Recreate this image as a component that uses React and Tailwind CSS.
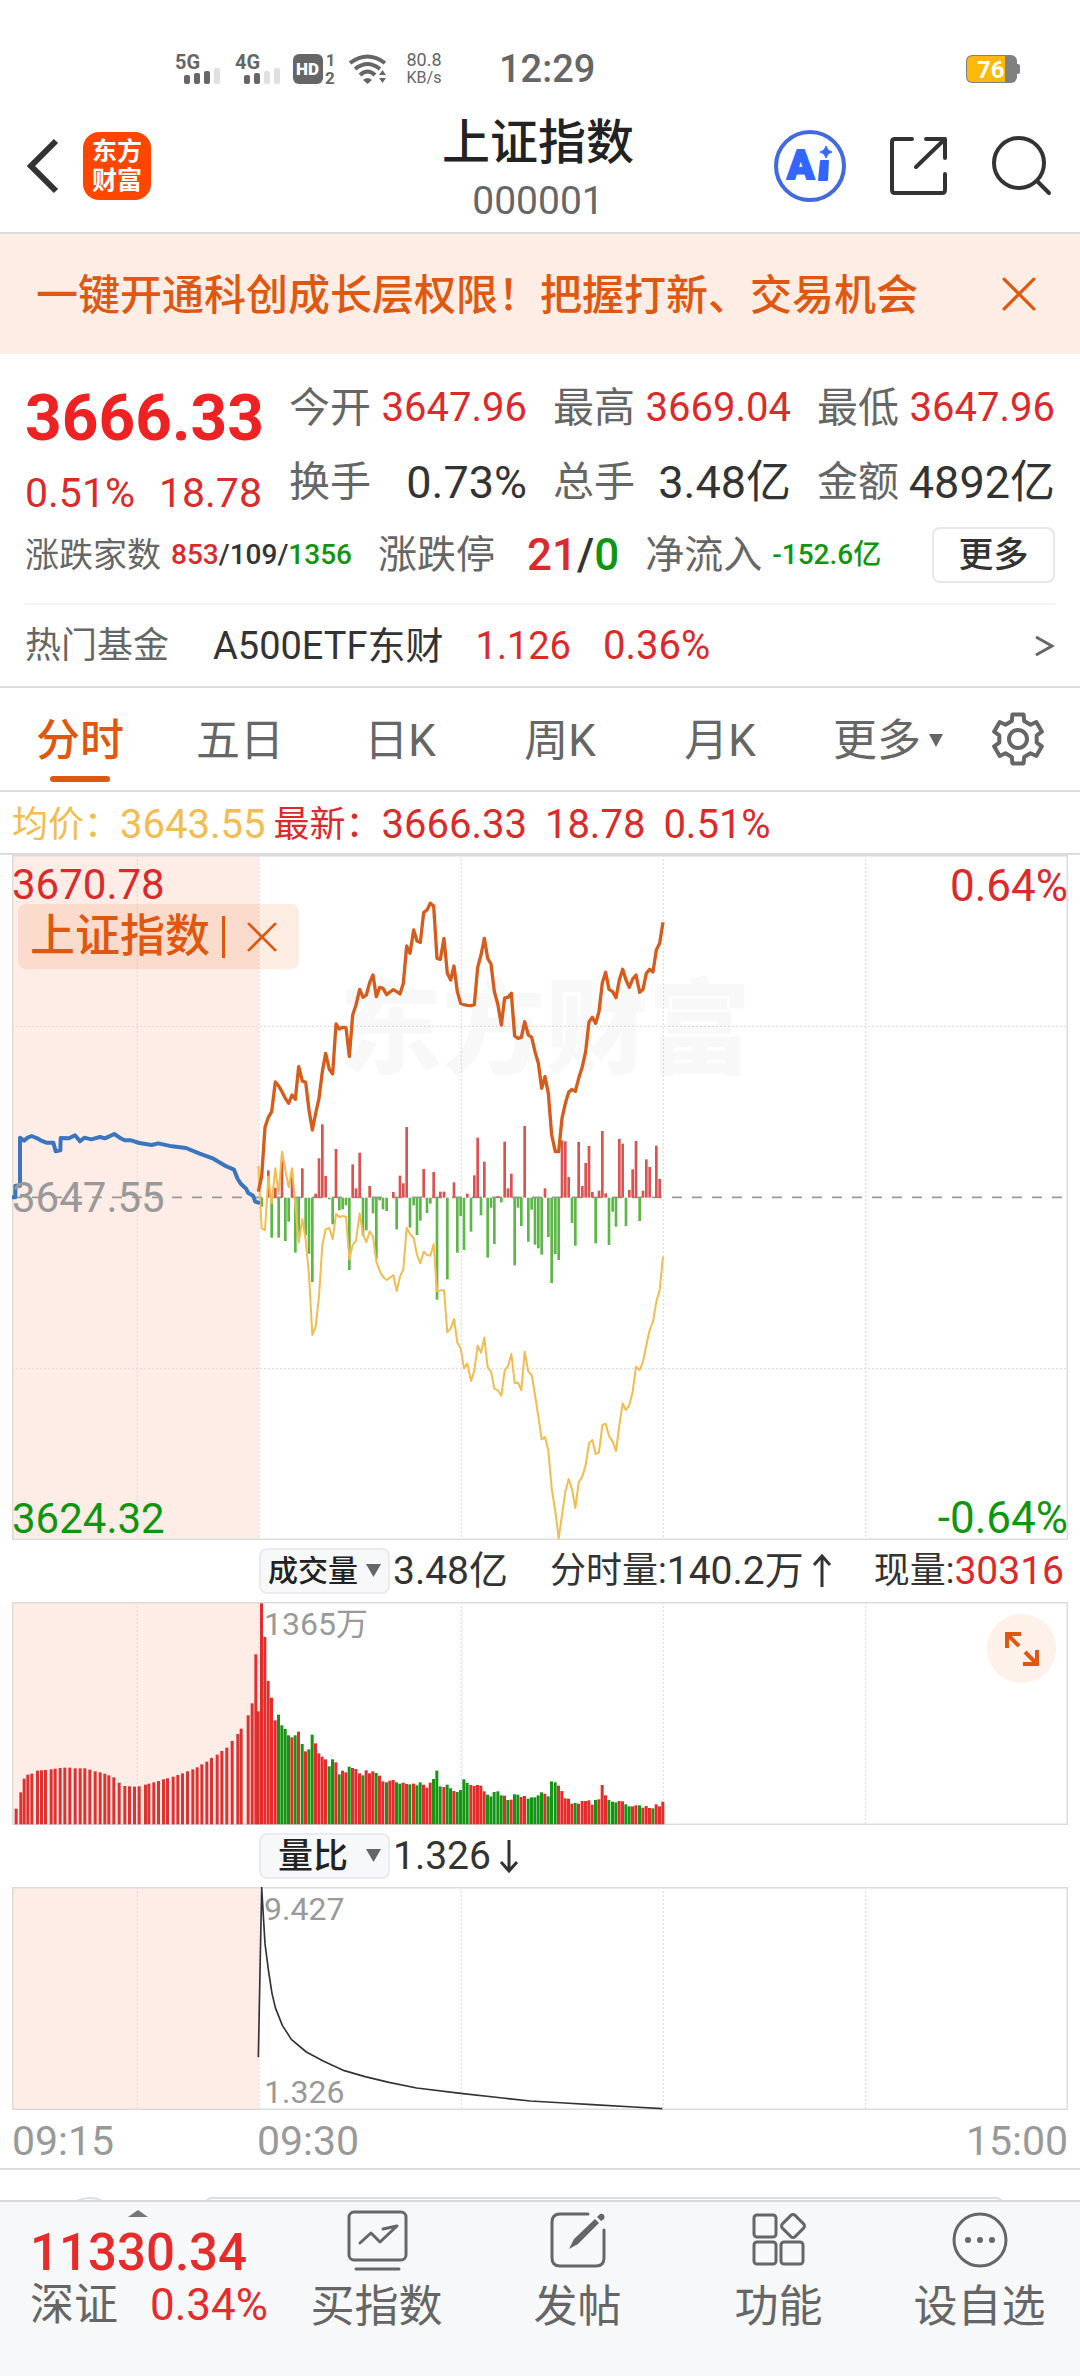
import { useState } from "react";

// Plot units are a third of a pixel: 3168 units wide, one minute = 10.12 units
const PLOT_W = 3168;
const MINUTE = 10.12;
const OPEN_X = 739;
const GRID_X = [376, 741, 1348, 1954, 2561];

const minuteX = (i) => Math.round(OPEN_X + i * MINUTE);

const PRICE = [
  935, 890, 742, 712, 695, 606, 618, 635, 655, 670, 645, 658, 560, 603, 607, 690, 750, 700, 655, 575,
  520, 568, 582, 432, 447, 442, 443, 530, 405, 375, 328, 352, 345, 308, 285, 350, 322, 325, 344, 336,
  329, 335, 342, 310, 198, 220, 150, 183, 187, 98, 90, 70, 78, 235, 238, 175, 280, 300, 258, 335,
  370, 374, 376, 377, 374, 262, 225, 175, 235, 252, 335, 375, 435, 354, 352, 340, 468, 475, 472, 425,
  465, 472, 515, 550, 625, 590, 640, 765, 815, 815, 715, 670, 637, 628, 634, 595, 560, 515, 425, 412,
  430, 395, 308, 277, 328, 335, 353, 300, 268, 300, 322, 297, 285, 337, 328, 280, 268, 276, 210, 190, 127,
];

const AVERAGE = [
  198, 385, 390, 230, 310, 205, 282, 155, 210, 262, 205, 315, 428, 357, 420, 525, 705, 680, 590, 435,
  388, 384, 418, 342, 351, 348, 350, 478, 435, 422, 340, 403, 427, 394, 410, 485, 512, 531, 540, 533,
  525, 573, 530, 508, 383, 402, 414, 465, 490, 455, 465, 467, 432, 574, 571, 571, 697, 686, 657, 728,
  745, 805, 791, 843, 812, 737, 758, 713, 802, 815, 866, 871, 887, 812, 798, 762, 849, 848, 871, 755,
  815, 825, 885, 950, 1018, 1011, 1052, 1165, 1235, 1315, 1245, 1175, 1137, 1168, 1224, 1147, 1130, 1095, 1030, 1020,
  1062, 1057, 975, 971, 1008, 1025, 1053, 975, 910, 930, 915, 875, 800, 810, 785, 735, 690, 665, 605, 570, 470,
];

// above zero = red, below = green
const MOMENTUM = [
  0, -27, 0, 82, -120, 30, -120, 112, -130, -72, 75, -165, -110, 88, -113, -168, -253, 12, 118, 220,
  65, -5, -80, 146, -38, -35, -23, -217, 100, 28, 135, -115, -98, 35, -47, -185, -8, -35, -40, 0,
  17, -95, 66, 43, 212, -90, -23, -112, -69, 86, -46, -18, 77, -306, 18, 18, -245, 0, 46, -165,
  -55, -157, 12, -102, 67, 180, -53, 108, -180, -30, -139, 5, -14, 168, 28, 72, -203, -30, -85, 215,
  -132, -36, -141, -152, -171, 28, -118, -256, -169, -187, 172, 169, 62, -76, -144, 167, 35, 104, 155, 17,
  -137, 21, 200, 13, -142, -42, -87, 176, 162, -85, 23, 85, 170, -70, 21, 115, 92, 0, 156, 56,
];

const AUCTION =
  "0,1027 10,1027 10,992 24,992 24,848 36,857 47,848 59,843 76,850 88,857 103,863 124,863 131,889 145,886 146,849 171,850 189,841 204,859 217,848 238,853 264,846 279,850 307,837 326,850 338,856 357,856 382,864 419,870 439,865 480,874 522,879 563,896 604,911 641,933 666,944 677,972 687,987 703,1002 708,1013 723,1022 730,1040 739,1043";

const AUCTION_VOLUME = [
  [12, 47], [26, 96], [36, 137], [47, 149], [59, 152], [76, 161], [88, 162], [100, 163], [117, 165], [129, 167],
  [144, 169], [158, 170], [173, 170], [189, 168], [204, 168], [218, 168], [233, 164], [249, 159], [264, 156], [278, 152],
  [290, 147], [305, 141], [321, 125], [338, 115], [352, 114], [367, 113], [381, 114], [400, 119], [410, 122], [425, 126],
  [439, 130], [454, 135], [466, 138], [483, 143], [497, 148], [511, 153], [526, 159], [542, 165], [555, 171], [569, 180],
  [584, 188], [598, 199], [615, 209], [629, 220], [644, 230], [660, 250], [677, 271], [687, 287], [708, 327], [720, 363], [731, 510],
];

const VOLUME = [
  339, 663, 562, 430, 380, 312, 329, 297, 286, 267, 261, 267, 278, 241, 219, 225, 269, 243, 213, 203,
  195, 174, 195, 186, 150, 161, 156, 173, 169, 166, 153, 147, 162, 153, 159, 154, 146, 129, 126, 131,
  133, 126, 122, 125, 121, 120, 122, 117, 126, 119, 110, 125, 136, 161, 114, 112, 119, 108, 100, 97,
  103, 135, 124, 118, 115, 118, 116, 99, 89, 84, 97, 99, 87, 86, 73, 74, 90, 89, 82, 85,
  77, 81, 81, 87, 96, 92, 84, 129, 126, 116, 100, 78, 77, 62, 64, 62, 70, 70, 72, 59,
  73, 75, 118, 87, 73, 68, 66, 70, 69, 60, 54, 54, 57, 57, 50, 55, 49, 48, 60, 54, 68,
];

const VOLUME_SIDE =
  "RRRRRRGGGGRGRGRGGRRRRGGRGRRGRRRGRRRGRRGRRGGRRGRGGRRRGGGRGGRGGGGRRRRRGGGGGRGRGGRRGGGGGRGGGRRRRRGRRRRRGRRRGGGRRGGRRGRRRGRRR";

const RATIO =
  "739,511 749,2 759,170 770,255 780,319 790,362 811,415 838,457 883,495 935,523 997,551 1059,569 1131,586 1214,603 1346,619 1472,633 1555,642 1658,648 1741,653 1865,660 1951,665";

const TABS = ["分时", "五日", "日K", "周K", "月K"];

const polar = (r, deg) => {
  const a = (deg * Math.PI) / 180;
  return `${(28 + r * Math.cos(a)).toFixed(1)},${(28 + r * Math.sin(a)).toFixed(1)}`;
};
const GEAR = [0, 1, 2, 3, 4, 5]
  .flatMap((k) => {
    const a = -90 + k * 60;
    return [polar(19, a - 19), polar(25, a - 13), polar(25, a + 13), polar(19, a + 19)];
  })
  .join(" ");

const line = (values, offset) => values.map((y, i) => `${minuteX(i)},${y + offset}`).join(" ");

function Signal({ label, strength }) {
  return (
    <svg className="overflow-visible" width="46" height="32" viewBox="0 0 46 32">
      <text x="0" y="16" fontSize="20" fontWeight="700" fill="#666">{label}</text>
      {[0, 1, 2, 3].map((i) => (
        <rect key={i} x={9 + i * 10} y={22 - i * 2 - (i === 3 ? 1 : 0)} width="6" height={9 + i * 2 + (i === 3 ? 1 : 0)} rx="2" fill={i < strength ? "#666" : "#e0e0e0"} />
      ))}
    </svg>
  );
}

function StatusBar() {
  return (
    <div className="flex h-[100px] items-center pt-[38px] pl-[175px] pr-[60px] text-[#666]">
      <Signal label="5G" strength={3} />
      <span className="ml-[14px]">
        <Signal label="4G" strength={2} />
      </span>
      <svg className="ml-3 overflow-visible" width="44" height="32" viewBox="0 0 44 32">
        <rect x="0" y="1" width="30" height="30" rx="6" fill="#666" />
        <text x="3" y="22" fontSize="17" fontWeight="900" fill="#fff">HD</text>
        <text x="33" y="13" fontSize="16" fontWeight="700" fill="#666">1</text>
        <text x="32" y="31" fontSize="17" fontWeight="700" fill="#666">2</text>
      </svg>
      <svg className="ml-3" width="38" height="32" viewBox="0 0 38 32" fill="none" stroke="#666" strokeWidth="4">
        <path d="M1 10 Q18.500 -3 36 10" />
        <path d="M6 16 Q18.500 6 31 16" />
        <path d="M11 22 Q18.500 15 26 22" />
        <path d="M14 27 Q18.500 23 23 27 L18.500 31 Z" fill="#666" stroke="none" />
        <path d="M30 22 L33.500 17 L37 22 Z M30 25 L33.500 30 L37 25 Z" fill="#666" stroke="none" />
      </svg>
      <div className="ml-4 w-[42px] text-center text-[18px] leading-[18px]">
        <div>80.8</div>
        <div className="text-[16px]">KB/s</div>
      </div>
      <div className="ml-[54px] text-[38px] leading-none font-medium">12:29</div>
      <svg className="ml-auto" width="54" height="28" viewBox="0 0 54 28">
        <rect x="48" y="9" width="6" height="10" rx="2" fill="#808080" />
        <rect x="0" y="0" width="51" height="28" rx="6" fill="#808080" />
        <path d="M7 1 H39 V27 H7 Q1 27 1 21 V7 Q1 1 7 1 Z" fill="#fdb90b" />
        <text x="11" y="23" fontSize="24" fontWeight="700" fill="#fff">76</text>
      </svg>
    </div>
  );
}

function NavBar() {
  return (
    <header className="grid h-[134px] grid-cols-[1fr_auto_1fr] items-center border-b-2 border-[#dcdcdc] pl-6 pr-7">
      <div className="flex items-center">
        <button aria-label="返回">
          <svg width="40" height="60" viewBox="0 0 40 60" fill="none" stroke="#333" strokeWidth="6">
            <path d="M32 5 L7 30 L32 55" />
          </svg>
        </button>
        <a href="#home" className="ml-[19px] flex h-[68px] w-[68px] flex-col items-center justify-center rounded-2xl bg-[#ff4600] text-[25px] leading-[29px] font-bold text-white">
          <span>东方</span>
          <span>财富</span>
        </a>
      </div>
      <div className="text-center">
        <h1 className="text-[48px] leading-[70px] font-medium text-[#222]">上证指数</h1>
        <div className="text-[39px] leading-[46px] text-[#666]">000001</div>
      </div>
      <div className="flex items-center justify-end">
        <button aria-label="AI 助手">
          <svg width="76" height="76" viewBox="0 0 76 76">
            <circle cx="38" cy="38" r="34" fill="none" stroke="#4169e1" strokeWidth="4" />
            <text x="15" y="51" fontSize="40" fontWeight="900" fill="#3366ff" stroke="#3366ff" strokeWidth="2" strokeLinejoin="round">A</text>
            <path d="M49 33 H56 L55 52 H47 Z" fill="#3366ff" stroke="#3366ff" strokeWidth="2" strokeLinejoin="round" />
            <path d="M54 18 Q55 23 60 24 Q55 25 54 30 Q53 25 48 24 Q53 23 54 18 Z" fill="#3366ff" stroke="#3366ff" />
          </svg>
        </button>
        <button className="ml-10" aria-label="分享">
          <svg width="62" height="62" viewBox="0 0 62 62" fill="none" stroke="#333" strokeWidth="4" strokeLinecap="round" strokeLinejoin="round">
            <path d="M24 4 H7 Q4 4 4 7 V55 Q4 58 7 58 H54 Q57 58 57 55 V39" />
            <path d="M38 4 H57 V23 M57 4 L28 32" />
          </svg>
        </button>
        <button className="ml-[38px]" aria-label="搜索">
          <svg width="64" height="64" viewBox="0 0 64 64" fill="none" stroke="#333" strokeWidth="4" strokeLinecap="round">
            <circle cx="31" cy="29" r="25" />
            <path d="M49 47 L61 59" />
          </svg>
        </button>
      </div>
    </header>
  );
}

function Cross({ size }) {
  return (
    <svg width={size} height={size} viewBox="0 0 32 32" fill="none" stroke="#e0570f" strokeWidth="3" strokeLinecap="round">
      <path d="M2 2 L30 30 M30 2 L2 30" />
    </svg>
  );
}

function Banner() {
  return (
    <div className="flex h-[120px] items-center justify-between bg-[#fdede4] pl-9 pr-11">
      <a href="#open" className="pt-1 text-[42px] leading-none font-medium text-[#e0570f]">一键开通科创成长层权限！把握打新、交易机会</a>
      <button aria-label="关闭">
        <Cross size={34} />
      </button>
    </div>
  );
}

function Stat({ label, value, up }) {
  return (
    <div className="flex h-[74px] items-center justify-between leading-none">
      <span className="text-[41px] text-[#666]">{label}</span>
      {up ? <span className="text-[40px] text-[#dc2a2a]">{value}</span> : <span className="text-[45px] text-[#333]">{value}</span>}
    </div>
  );
}

function Quote() {
  return (
    <section className="border-b-2 border-[#dcdcdc] px-[25px] pt-[17px] whitespace-nowrap">
      <div className="flex">
        <div className="w-[264px] shrink-0 text-[#dc2a2a]">
          <div className="text-[64px] leading-[96px] font-bold text-[#ee2222]">3666.33</div>
          <div className="flex gap-6 text-[41px] leading-[52px]">
            <span>0.51%</span>
            <span>18.78</span>
          </div>
        </div>
        <div className="grid flex-1 grid-cols-3 gap-x-[26px]">
          <Stat label="今开" value="3647.96" up />
          <Stat label="最高" value="3669.04" up />
          <Stat label="最低" value="3647.96" up />
          <Stat label="换手" value="0.73%" />
          <Stat label="总手" value="3.48亿" />
          <Stat label="金额" value="4892亿" />
        </div>
      </div>
      <div className="flex h-[72px] items-center leading-none text-[#666]">
        <span className="text-[34px]">涨跌家数</span>
        <span className="ml-[10px] text-[28px] font-medium text-[#333]">
          <span className="text-[#dc2a2a]">853</span>/109/<span className="text-[#0f960f]">1356</span>
        </span>
        <span className="ml-[26px] text-[39px]">涨跌停</span>
        <span className="ml-8 text-[44px] font-medium text-[#333]">
          <span className="text-[#dc2a2a]">21</span>/<span className="text-[#0f960f]">0</span>
        </span>
        <span className="ml-[26px] text-[39px]">净流入</span>
        <span className="ml-[10px] text-[28px] font-medium text-[#0f960f]">-152.6亿</span>
        <button className="ml-auto h-14 w-[123px] rounded-lg border-2 border-[#e8e8e8] text-[35px] font-medium text-[#333]">更多</button>
      </div>
      <a href="#fund" className="mt-3 flex h-[83px] items-center border-t-2 border-[#f4f4f4] text-[38px] leading-none text-[#dc2a2a]">
        <span className="text-[36px] text-[#666]">热门基金</span>
        <span className="ml-11 text-[#333]">A500ETF东财</span>
        <span className="ml-8">1.126</span>
        <span className="ml-8 text-[40px]">0.36%</span>
        <svg className="ml-auto" width="20" height="22" viewBox="0 0 20 22" fill="none" stroke="#666" strokeWidth="3">
          <path d="M1 2 L17 11 L1 20" />
        </svg>
      </a>
    </section>
  );
}

function Tabs() {
  const [active, setActive] = useState("分时");
  return (
    <nav className="grid h-[104px] grid-cols-[repeat(5,160fr)_176fr_84fr] items-stretch border-b-2 border-[#dcdcdc] pr-5 text-[44px] text-[#666]">
      {TABS.map((tab) => (
        <button key={tab} onClick={() => setActive(tab)} className={tab === active ? "relative pt-1 font-medium text-[#e0570f]" : "relative pt-1"}>
          {tab}
          {tab === active && <span className="absolute bottom-2 left-1/2 h-[6px] w-[60px] -translate-x-1/2 rounded-full bg-[#e0570f]" />}
        </button>
      ))}
      <button className="flex items-center justify-center gap-2 pt-1">
        更多
        <svg width="14" height="14" viewBox="0 0 14 14" fill="#666">
          <path d="M0 0 H14 L7 13 Z" />
        </svg>
      </button>
      <button className="flex items-center justify-center" aria-label="设置">
        <svg width="56" height="56" viewBox="0 0 56 56" fill="none" stroke="#666" strokeWidth="4" strokeLinejoin="round">
          <polygon points={GEAR} />
          <circle cx="28" cy="28" r="9" />
        </svg>
      </button>
    </nav>
  );
}

function Grid({ height, rows = [] }) {
  return (
    <>
      <rect x="0" y="0" width="741" height={height} fill="#fdede6" />
      <g stroke="#dadada" strokeWidth="3" strokeDasharray="6 6">
        {GRID_X.map((x) => (
          <line key={x} x1={x} x2={x} y1="0" y2={height} />
        ))}
        {rows.map((y) => (
          <line key={y} x1="0" x2={PLOT_W} y1={y} y2={y} />
        ))}
      </g>
      <rect x="2" y="2" width={PLOT_W - 4} height={height - 4} fill="none" stroke="#dcdcdc" strokeWidth="5" />
    </>
  );
}

function PriceChart() {
  const [tagged, setTagged] = useState(true);
  return (
    <div className="relative mx-3 h-[685px] text-[42px] leading-none">
      <svg className="block h-full w-full" viewBox="0 0 3168 2055" preserveAspectRatio="none">
        <Grid height={2055} rows={[514, 1541]} />
        <text x="1600" y="634" textAnchor="middle" fontSize="309" fontWeight="900" fill="#777" fillOpacity="0.05">东方财富</text>
        <line x1="0" x2={PLOT_W} y1="1027" y2="1027" stroke="#999" strokeWidth="5" strokeDasharray="30 30" />
        {MOMENTUM.map((v, i) => (
          <rect key={i} x={minuteX(i) - 4} y={v > 0 ? 1028 - v : 1028} width="8" height={Math.abs(v)} fill={v > 0 ? "#db5250" : "#5cb648"} />
        ))}
        <g fill="none" strokeLinejoin="round">
          <polyline points={line(AVERAGE, 735)} stroke="#f2bc4e" strokeWidth="6" />
          <polyline points={line(PRICE, 75)} stroke="#d75c1c" strokeWidth="10" />
          <polyline points={AUCTION} stroke="#3a75bd" strokeWidth="12" strokeLinecap="round" />
        </g>
      </svg>
      <span className="absolute top-[9px] left-0 text-[#dc2a2a]">3670.78</span>
      <span className="absolute top-[9px] right-0 text-[44px] text-[#dc2a2a]">0.64%</span>
      <span className="absolute top-1/2 left-0 -translate-y-1/2 text-[#999]">3647.55</span>
      <span className="absolute bottom-0 left-0 text-[#0f960f]">3624.32</span>
      <span className="absolute right-0 bottom-0 text-[44px] text-[#0f960f]">-0.64%</span>
      {tagged && (
        <div className="absolute top-[49px] left-[6px] flex h-[65px] w-[281px] items-center rounded-lg bg-[#f26a20]/13 pl-3 text-[45px] font-medium text-[#e0570f]">
          上证指数
          <span className="ml-3 h-[42px] w-[3px] bg-[#e0570f]" />
          <button className="ml-[22px]" aria-label="移除上证指数" onClick={() => setTagged(false)}>
            <Cross size={30} />
          </button>
        </div>
      )}
    </div>
  );
}

function Indicator({ label, options, className }) {
  return (
    <div className="relative h-[46px] w-[131px] shrink-0">
      <select aria-label={label} defaultValue={options[0]} className={className}>
        {options.map((o) => (
          <option key={o}>{o}</option>
        ))}
      </select>
      <svg className="pointer-events-none absolute top-4 right-[9px]" width="15" height="13" viewBox="0 0 15 13" fill="#666">
        <path d="M0 0 H15 L7.500 13 Z" />
      </svg>
    </div>
  );
}

function Arrow({ down }) {
  return (
    <svg className={down ? "ml-2 rotate-180" : "ml-2"} width="20" height="34" viewBox="0 0 20 34" fill="none" stroke="#333" strokeWidth="3">
      <path d="M10 33 V3 M2 11 L10 2 L18 11" />
    </svg>
  );
}

function VolumeChart() {
  return (
    <>
      <div className="flex h-[62px] items-center pr-4 pl-[259px] text-[39px] leading-none whitespace-nowrap text-[#333]">
        <Indicator
          label="副图指标一"
          options={["成交量", "量比"]}
          className="h-full w-full appearance-none rounded-lg border-2 border-[#e9ebee] bg-[#f7f8fa] pl-[7px] text-[30px] font-medium text-[#222]"
        />
        <span className="ml-[3px]">3.48亿</span>
        <span className="ml-auto flex items-center">
          <span className="text-[36px]">分时量:</span>140.2万
          <Arrow />
        </span>
        <span className="ml-auto flex items-center">
          <span className="text-[36px]">现量:</span>
          <span className="text-[#dc2a2a]">30316</span>
        </span>
      </div>
      <div className="relative mx-3 h-[223px]">
        <svg className="block h-full w-full" viewBox="0 0 3168 669" preserveAspectRatio="none">
          <Grid height={669} />
          {AUCTION_VOLUME.map(([x, h]) => (
            <rect key={x} x={x - 4} y={667 - h} width="9" height={h} fill="#dc3232" />
          ))}
          {VOLUME.map((h, i) => (
            <rect key={i} x={minuteX(i) - 5} y={667 - h} width="9" height={h} fill={VOLUME_SIDE[i] === "G" ? "#149614" : "#e62b2b"} />
          ))}
        </svg>
        <span className="absolute top-1 left-[252px] text-[32px] leading-9 text-[#999]">1365万</span>
        <button className="absolute top-3 right-3 flex h-[69px] w-[69px] items-center justify-center rounded-full bg-[#fef1e9]" aria-label="全屏">
          <svg width="36" height="36" viewBox="0 0 36 36" fill="none" stroke="#e0570f" strokeWidth="4">
            <path d="M3 17 V3 H17 M3 3 L15 15 M33 19 V33 H19 M33 33 L21 21" />
          </svg>
        </button>
      </div>
    </>
  );
}

function RatioChart() {
  return (
    <>
      <div className="flex h-[62px] items-center pl-[259px] text-[39px] leading-none text-[#333]">
        <Indicator
          label="副图指标二"
          options={["量比", "成交量"]}
          className="h-full w-full appearance-none rounded-lg border-2 border-[#e9ebee] bg-[#f7f8fa] pl-[17px] text-[35px] font-medium text-[#222]"
        />
        <span className="ml-[3px]">1.326</span>
        <Arrow down />
      </div>
      <div className="relative mx-3 h-[223px] text-[32px] leading-9 text-[#999]">
        <svg className="block h-full w-full" viewBox="0 0 3168 669" preserveAspectRatio="none">
          <Grid height={669} />
          <polyline points={RATIO} fill="none" stroke="#333" strokeWidth="5" strokeLinejoin="round" />
        </svg>
        <span className="absolute top-1 left-[252px]">9.427</span>
        <span className="absolute bottom-0 left-[252px]">1.326</span>
      </div>
      <div className="grid h-[60px] grid-cols-[245fr_811fr] items-center border-b-2 border-[#dcdcdc] px-3 pt-1 text-[41px] leading-none text-[#999]">
        <span>09:15</span>
        <span className="flex justify-between">
          <span>09:30</span>
          <span>15:00</span>
        </span>
      </div>
    </>
  );
}

function Action({ label, children }) {
  return (
    <button className="flex flex-1 flex-col items-center pt-[6px] text-[44px] leading-[70px] text-[#666]">
      <svg width="64" height="64" viewBox="0 0 64 64" fill="none" stroke="#666" strokeWidth="3" strokeLinecap="round" strokeLinejoin="round">
        {children}
      </svg>
      {label}
    </button>
  );
}

function BottomBar() {
  return (
    <footer className="flex h-[176px] border-t-2 border-[#d5d9dd] bg-[#f7f8fa] whitespace-nowrap">
      <a href="#sz" className="flex w-[276px] shrink-0 flex-col pl-[30px] text-[#e62b2b]">
        <svg className="mt-2 ml-[98px]" width="20" height="7" viewBox="0 0 20 7" fill="#777">
          <path d="M0 7 L10 0 L20 7 Z" />
        </svg>
        <span className="text-[51px] leading-[72px] font-medium">11330.34</span>
        <span className="flex items-center gap-8 text-[44px] leading-[32px]">
          <span className="text-[#666]">深证</span>
          <span>0.34%</span>
        </span>
      </a>
      <Action label="买指数">
        <rect x="4" y="4" width="57" height="48" rx="5" />
        <path d="M15 35 L26 25 L35 34 L52 18 M38 21 L52 18" />
        <path d="M11 61 H54" />
      </Action>
      <Action label="发帖">
        <path d="M42 6 H14 Q6 6 6 14 V50 Q6 58 14 58 H50 Q58 58 58 50 V22" />
        <path d="M23 41 L28 31 L49 11 L53 15 L32 36 Z" fill="#666" stroke="none" />
        <path d="M51 9 L54 6 Q56 5 58 7 Q59 9 58 11 L55 13 Z" fill="#666" stroke="none" />
      </Action>
      <Action label="功能">
        <rect x="7" y="7" width="22" height="22" rx="3" />
        <rect x="7" y="34" width="22" height="22" rx="3" />
        <rect x="34" y="34" width="22" height="22" rx="3" />
        <rect x="37" y="9" width="18" height="18" rx="3" transform="rotate(45 46 18)" />
      </Action>
      <Action label="设自选">
        <circle cx="32" cy="32" r="26" />
        <g fill="#666" stroke="none">
          <circle cx="20" cy="32" r="3" />
          <circle cx="32" cy="32" r="3" />
          <circle cx="44" cy="32" r="3" />
        </g>
      </Action>
    </footer>
  );
}

export default function App() {
  return (
    <div className="min-h-screen w-full bg-white font-[Roboto,'Noto_Sans_CJK_SC',sans-serif]">
      <StatusBar />
      <NavBar />
      <Banner />
      <Quote />
      <Tabs />
      <div className="flex h-[63px] items-center border-b-2 border-[#dcdcdc] pt-1 pl-3 text-[40px] leading-none whitespace-nowrap text-[#dc2a2a]">
        <span className="text-[36px] text-[#f2bc4e]">均价：</span>
        <span className="text-[#f2bc4e]">3643.55</span>
        <span className="ml-2 text-[36px]">最新：</span>
        <span>3666.33</span>
        <span className="ml-[18px]">18.78</span>
        <span className="ml-[18px]">0.51%</span>
      </div>
      <PriceChart />
      <VolumeChart />
      <RatioChart />
      <div className="flex h-[30px] gap-[84px] overflow-hidden pt-[27px] pr-[76px] pl-[60px]">
        <div className="h-[60px] w-[60px] shrink-0 rounded-full border-2 border-[#dcdfe3]" />
        <div className="h-[60px] flex-1 rounded-lg border-2 border-[#dcdfe3]" />
      </div>
      <BottomBar />
    </div>
  );
}
